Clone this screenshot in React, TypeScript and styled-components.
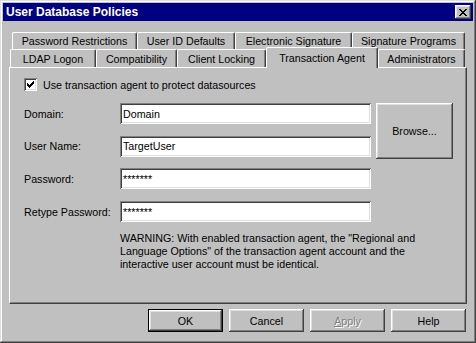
import { Fragment } from 'react';
import styled, { createGlobalStyle } from 'styled-components';

const GlobalStyle = createGlobalStyle`
  html, body {
    margin: 0;
    padding: 0;
    background: #c0c0c0;
  }
  body {
    font-family: "Liberation Sans", Arial, sans-serif;
    font-size: 10.7px;
    color: #000;
  }
`;

const Window = styled.div`
  box-sizing: border-box;
  width: 476px;
  height: 343px;
  padding: 3px;
  background: #c0c0c0;
  box-shadow: inset -1px -1px #404040, inset 1px 1px #dfdfdf,
    inset -2px -2px #808080, inset 2px 2px #fff;
  display: flex;
  flex-direction: column;
`;

const TitleBar = styled.div`
  height: 18px;
  background: #000080;
  display: flex;
  align-items: center;
  justify-content: space-between;
  padding: 0 2px 0 3px;
`;

const TitleText = styled.span`
  color: #fff;
  font-weight: bold;
  font-size: 12px;
`;

const CloseButton = styled.div`
  box-sizing: border-box;
  width: 16px;
  height: 14px;
  background: #c0c0c0;
  box-shadow: inset -1px -1px #404040, inset 1px 1px #fff,
    inset -2px -2px #808080, inset 2px 2px #dfdfdf;
  display: flex;
  align-items: center;
  justify-content: center;
  svg {
    margin-left: -1px;
  }
`;

const Body = styled.div`
  padding: 11px 6px 0 6px;
  display: flex;
  flex-direction: column;
`;

const TabRow = styled.div<{ $h: number; $indent: number }>`
  display: flex;
  align-items: flex-end;
  height: ${(p) => p.$h}px;
  padding-left: ${(p) => p.$indent}px;
`;

const Tab = styled.div<{ $w: number; $h: number; $active?: boolean }>`
  box-sizing: border-box;
  flex: none;
  width: ${(p) => p.$w}px;
  height: ${(p) => (p.$active ? p.$h + 3 : p.$h)}px;
  margin-top: ${(p) => (p.$active ? -2 : 0)}px;
  margin-bottom: ${(p) => (p.$active ? -1 : 0)}px;
  padding-bottom: ${(p) => (p.$active ? 1 : 0)}px;
  position: ${(p) => (p.$active ? 'relative' : 'static')};
  z-index: ${(p) => (p.$active ? 2 : 'auto')};
  background: #c0c0c0;
  border-top: 1px solid #fff;
  border-left: 1px solid #fff;
  border-right: 1px solid #404040;
  border-radius: 2px 2px 0 0;
  box-shadow: inset -1px 0 #808080;
  display: flex;
  align-items: center;
  justify-content: center;
  white-space: nowrap;
`;

const Panel = styled.div`
  box-sizing: border-box;
  height: 237px;
  border-top: 1px solid #fff;
  border-left: 1px solid #fff;
  border-right: 1px solid #404040;
  border-bottom: 1px solid #404040;
  box-shadow: inset -1px -1px #808080;
  padding: 10px 14px 0 14px;
  display: flex;
  flex-direction: column;
`;

const CheckRow = styled.label`
  display: flex;
  align-items: center;
  gap: 6px;
  height: 13px;
`;

const CheckBox = styled.span`
  box-sizing: border-box;
  width: 13px;
  height: 13px;
  background: #fff;
  box-shadow: inset 1px 1px #808080, inset -1px -1px #fff,
    inset 2px 2px #404040, inset -2px -2px #dfdfdf;
  display: flex;
  align-items: center;
  justify-content: center;
`;

const FormGrid = styled.div`
  margin-top: 12px;
  display: grid;
  grid-template-columns: 91px 251px 77px;
  grid-template-rows: repeat(4, 21px);
  column-gap: 5px;
  row-gap: 11.7px;
`;

const Label = styled.span<{ $row: number }>`
  grid-column: 1;
  grid-row: ${(p) => p.$row};
  align-self: center;
`;

const Field = styled.div<{ $row: number }>`
  grid-column: 2;
  grid-row: ${(p) => p.$row};
  box-sizing: border-box;
  height: 21px;
  background: #fff;
  box-shadow: inset 1px 1px #808080, inset -1px -1px #fff,
    inset 2px 2px #404040, inset -2px -2px #dfdfdf;
  padding: 0 3px;
  display: flex;
  align-items: center;
  white-space: nowrap;
`;

const Button = styled.button<{ $default?: boolean; $disabled?: boolean }>`
  box-sizing: border-box;
  width: 75px;
  height: 23px;
  padding: 0;
  font: inherit;
  color: ${(p) => (p.$disabled ? '#808080' : '#000')};
  text-shadow: ${(p) => (p.$disabled ? '1px 1px #fff' : 'none')};
  background: #c0c0c0;
  border: ${(p) => (p.$default ? '1px solid #000' : 'none')};
  border-radius: 0;
  box-shadow: inset -1px -1px #404040, inset 1px 1px #fff,
    inset -2px -2px #808080, inset 2px 2px #dfdfdf;
  u {
    text-decoration: underline;
  }
`;

const BrowseButton = styled(Button)`
  grid-column: 3;
  grid-row: 1 / span 2;
  width: 77px;
  height: 56px;
`;

const Warning = styled.p`
  margin: 10px 0 0 96px;
  line-height: 13px;
`;

const ButtonRow = styled.div`
  display: flex;
  justify-content: flex-end;
  gap: 6px;
  margin-top: 5px;
  padding-right: 1px;
`;

const backTabs = [
  { label: 'Password Restrictions', w: 125 },
  { label: 'User ID Defaults', w: 98 },
  { label: 'Electronic Signature', w: 117 },
  { label: 'Signature Programs', w: 113 },
];

const frontTabs = [
  { label: 'LDAP Logon', w: 86 },
  { label: 'Compatibility', w: 81 },
  { label: 'Client Locking', w: 89 },
  { label: 'Transaction Agent', w: 112, active: true },
  { label: 'Administrators', w: 87 },
];

const fields = [
  { label: 'Domain:', value: 'Domain' },
  { label: 'User Name:', value: 'TargetUser' },
  { label: 'Password:', value: '*******' },
  { label: 'Retype Password:', value: '*******' },
];

const CloseGlyph = () => (
  <svg width="8" height="7" viewBox="0 0 8 7" shapeRendering="crispEdges">
    <path
      fill="#000"
      d="M0 0h2v1H0zM6 0h2v1H6zM1 1h2v1H1zM5 1h2v1H5zM2 2h4v1H2zM3 3h2v1H3zM2 4h4v1H2zM1 5h2v1H1zM5 5h2v1H5zM0 6h2v1H0zM6 6h2v1H6z"
    />
  </svg>
);

const CheckGlyph = () => (
  <svg width="7" height="7" viewBox="0 0 7 7" shapeRendering="crispEdges">
    <path
      fill="#000"
      d="M6 0h1v1H6zM5 1h2v1H5zM0 2h1v1H0zM4 2h3v1H4zM0 3h2v1H0zM3 3h3v1H3zM0 4h5v1H0zM1 5h3v1H1zM2 6h1v1H2z"
    />
  </svg>
);

const App = () => {
  return (
    <>
      <GlobalStyle />
      <Window>
        <TitleBar>
          <TitleText>User Database Policies</TitleText>
          <CloseButton>
            <CloseGlyph />
          </CloseButton>
        </TitleBar>
        <Body>
          <TabRow $h={17} $indent={3}>
            {backTabs.map((t) => (
              <Tab key={t.label} $w={t.w} $h={17}>
                {t.label}
              </Tab>
            ))}
          </TabRow>
          <TabRow $h={18} $indent={1}>
            {frontTabs.map((t) => (
              <Tab key={t.label} $w={t.w} $h={18} $active={t.active}>
                {t.label}
              </Tab>
            ))}
          </TabRow>
          <Panel>
            <CheckRow>
              <CheckBox>
                <CheckGlyph />
              </CheckBox>
              Use transaction agent to protect datasources
            </CheckRow>
            <FormGrid>
              {fields.map((f, i) => (
                <Fragment key={f.label}>
                  <Label $row={i + 1}>{f.label}</Label>
                  <Field $row={i + 1}>{f.value}</Field>
                </Fragment>
              ))}
              <BrowseButton>Browse...</BrowseButton>
            </FormGrid>
            <Warning>
              WARNING: With enabled transaction agent, the "Regional and
              <br />
              Language Options" of the transaction agent account and the
              <br />
              interactive user account must be identical.
            </Warning>
          </Panel>
          <ButtonRow>
            <Button $default>OK</Button>
            <Button>Cancel</Button>
            <Button $disabled>
              <u>A</u>pply
            </Button>
            <Button>Help</Button>
          </ButtonRow>
        </Body>
      </Window>
    </>
  );
};

export default App;
